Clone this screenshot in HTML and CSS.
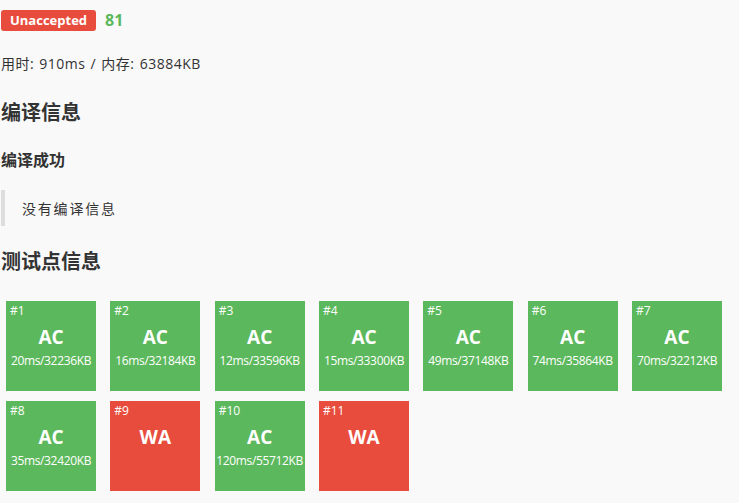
FILE: index.html
```html
<!DOCTYPE html>
<html lang="zh-CN">
<head>
<meta charset="utf-8">
<title>评测结果</title>
<link rel="stylesheet" href="styles.css">
</head>
<body>
<div class="page">
  <div class="head">
    <span class="badge">Unaccepted</span>
    <span class="score">81</span>
  </div>
  <p class="stat">用时: 910ms / 内存: 63884KB</p>
  <h3 class="sec first">编译信息</h3>
  <h4 class="sub">编译成功</h4>
  <blockquote class="msg">没有编译信息</blockquote>
  <h3 class="sec second">测试点信息</h3>
  <div class="cases">
    <div class="case ac"><div class="num">#1</div><div class="res">AC</div><div class="info">20ms/32236KB</div></div>
    <div class="case ac"><div class="num">#2</div><div class="res">AC</div><div class="info">16ms/32184KB</div></div>
    <div class="case ac"><div class="num">#3</div><div class="res">AC</div><div class="info">12ms/33596KB</div></div>
    <div class="case ac"><div class="num">#4</div><div class="res">AC</div><div class="info">15ms/33300KB</div></div>
    <div class="case ac"><div class="num">#5</div><div class="res">AC</div><div class="info">49ms/37148KB</div></div>
    <div class="case ac"><div class="num">#6</div><div class="res">AC</div><div class="info">74ms/35864KB</div></div>
    <div class="case ac"><div class="num">#7</div><div class="res">AC</div><div class="info">70ms/32212KB</div></div>
    <div class="case ac"><div class="num">#8</div><div class="res">AC</div><div class="info">35ms/32420KB</div></div>
    <div class="case wa"><div class="num">#9</div><div class="res">WA</div><div class="info"></div></div>
    <div class="case ac"><div class="num">#10</div><div class="res">AC</div><div class="info">120ms/55712KB</div></div>
    <div class="case wa"><div class="num">#11</div><div class="res">WA</div><div class="info"></div></div>
  </div>
</div>
</body>
</html>
```

FILE: styles.css
```css
html, body {
  margin: 0;
  padding: 0;
  background: #f9f9f9;
}

body {
  font-family: "Open Sans", "Noto Sans CJK SC", "Liberation Sans", sans-serif;
  color: #333333;
  font-size: 14px;
}

.page {
  padding: 10px 0 0 1px;
}

.head {
  display: flex;
  align-items: center;
  height: 21px;
  gap: 9px;
}

.badge {
  display: inline-block;
  background: #e74c3c;
  color: #ffffff;
  font-weight: bold;
  font-size: 13px;
  line-height: 21px;
  height: 21px;
  padding: 0 9px;
  border-radius: 3px;
}

.score {
  color: #5cb85c;
  font-weight: bold;
  font-size: 16px;
  line-height: 21px;
}

.stat {
  margin: 23px 0 0;
  font-size: 14px;
  line-height: 20px;
  letter-spacing: 0.5px;
  word-spacing: 1px;
}

.sec {
  margin: 0;
  font-size: 20px;
  font-weight: bold;
  line-height: 28px;
}

.sec.first {
  margin-top: 25px;
}

.sec.second {
  margin-top: 22px;
}

.sub {
  margin: 22px 0 0;
  font-size: 16px;
  font-weight: bold;
  line-height: 22px;
}

.msg {
  margin: 19px 0 0;
  border-left: 4px solid #dddddd;
  padding: 8px 0 8px 17px;
  font-family: "Noto Sans CJK SC", sans-serif;
  font-size: 14px;
  line-height: 20px;
  letter-spacing: 1.8px;
  color: #333333;
}

.cases {
  margin-top: 25px;
  padding-left: 5px;
  display: flex;
  flex-wrap: wrap;
  gap: 10px 14.33px;
}

.case {
  width: 90px;
  height: 90px;
  color: #ffffff;
  text-align: center;
}

.case.ac {
  background: #5cb85c;
}

.case.wa {
  background: #e74c3c;
}

.num {
  text-align: left;
  padding: 2px 0 0 4px;
  font-size: 12px;
  line-height: 16px;
}

.res {
  margin-top: 5px;
  font-size: 19px;
  font-weight: bold;
  line-height: 26px;
}

.info {
  margin-top: 3px;
  font-size: 12px;
  line-height: 16px;
  letter-spacing: -0.35px;
}
```
